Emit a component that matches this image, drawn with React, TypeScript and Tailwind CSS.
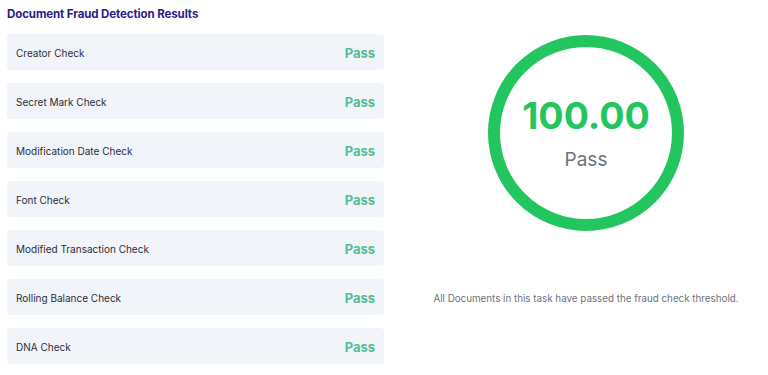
import React from "react";

const checks = [
  "Creator Check",
  "Secret Mark Check",
  "Modification Date Check",
  "Font Check",
  "Modified Transaction Check",
  "Rolling Balance Check",
  "DNA Check",
];

export default function App() {
  return (
    <div
      className="w-[768px] h-[375px] bg-white flex overflow-hidden"
      style={{ fontFamily: "Inter, 'Open Sans', sans-serif" }}
    >
      <div className="w-[377px] ml-[7px] flex flex-col">
        <h1 className="text-[11.5px] leading-[16px] font-bold text-[#2b1b8c] mt-[6px] mb-[12px] tracking-[-0.1px]">
          Document Fraud Detection Results
        </h1>
        <div className="flex flex-col gap-[13px]">
          {checks.map((c) => (
            <div
              key={c}
              className="h-[36px] rounded-[4px] bg-[#f1f4f9] flex items-center justify-between pl-[9px] pr-[9px]"
            >
              <span className="text-[10px] text-[#2d2d3a] pt-[2px]">{c}</span>
              <span className="text-[13px] font-bold text-[#52be98] pt-[3px]">Pass</span>
            </div>
          ))}
        </div>
      </div>
      <div className="flex-1 ml-[20px] flex flex-col items-center">
        <div className="mt-[35px] w-[196px] h-[196px] rounded-full border-[12px] border-[#22c55e] flex flex-col items-center justify-center">
          <div className="text-[37.5px] leading-[44px] font-bold text-[#22c55e] mt-[0px]">100.00</div>
          <div className="text-[19px] leading-[24px] text-[#6b7280] mt-[10px]">Pass</div>
        </div>
        <p className="mt-[61px] text-[9.8px] text-[#6b7280]">
          All Documents in this task have passed the fraud check threshold.
        </p>
      </div>
    </div>
  );
}
